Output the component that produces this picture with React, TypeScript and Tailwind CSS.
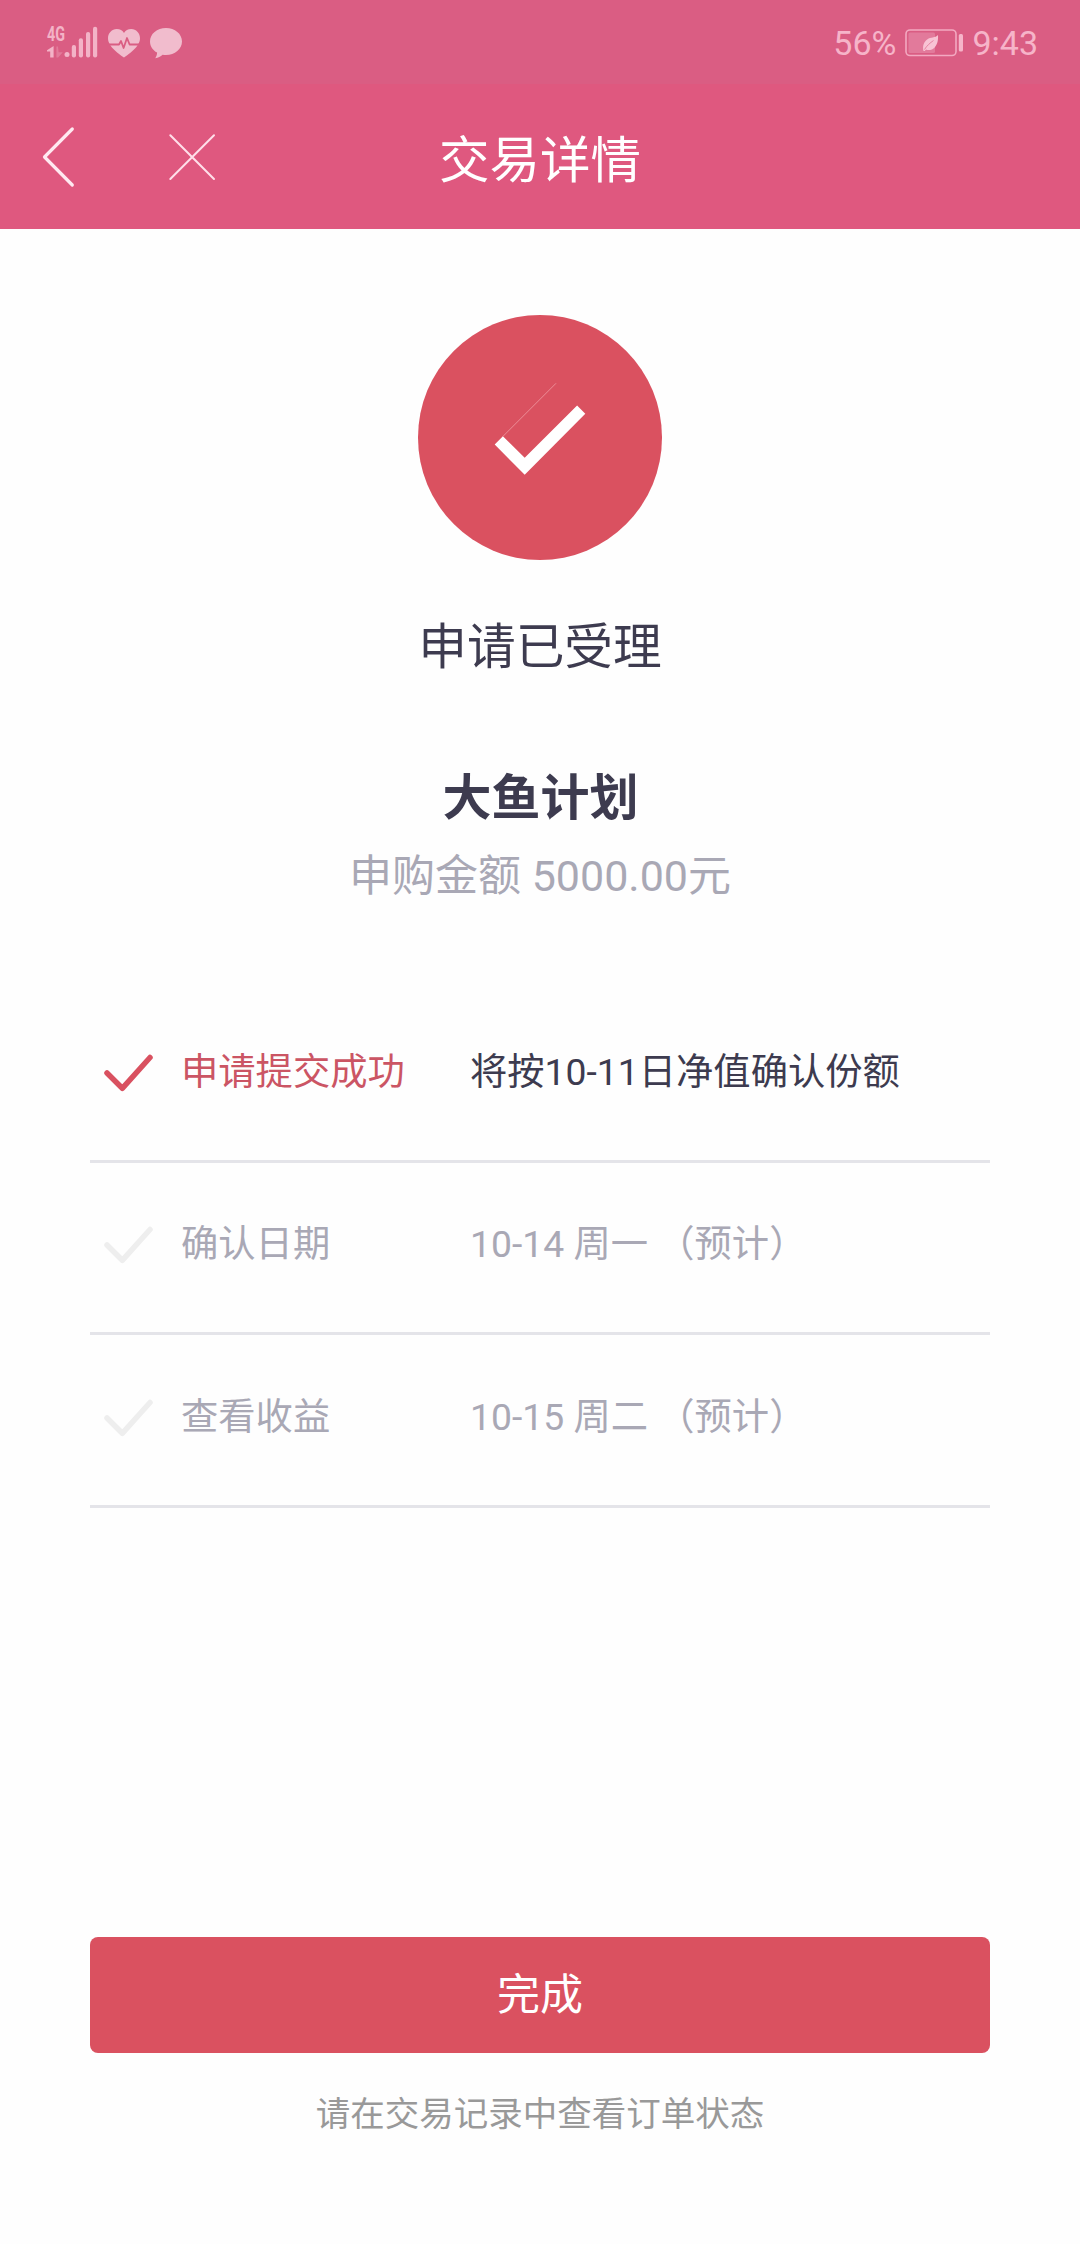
type Step = {
  label: string
  value: string
  done: boolean
}

const steps: Step[] = [
  { label: '申请提交成功', value: '将按10-11日净值确认份额', done: true },
  { label: '确认日期', value: '10-14 周一 （预计）', done: false },
  { label: '查看收益', value: '10-15 周二 （预计）', done: false },
]

function SignalIcon() {
  return (
    <svg width="56" height="40" viewBox="44 19 56 40" fill="#f3b3c7">
      <text
        x="47"
        y="40.5"
        fontSize="19.5"
        fontWeight="700"
        textLength="18"
        lengthAdjust="spacingAndGlyphs"
        className="font-['Roboto',sans-serif]"
      >
        4G
      </text>
      <path d="M53.6 46v11.5h-3.4v-6h-3.2v-1.2z" />
      <path d="M56.4 46.5v11h1.8l4.6-5.3h-4.2l-.6-5.7z" opacity="0.35" />
      <circle cx="67" cy="54.6" r="2.5" />
      <rect x="71.8" y="45" width="4.2" height="12.5" rx="2" />
      <rect x="78.8" y="38.3" width="4.2" height="19.2" rx="2" />
      <rect x="86" y="32" width="4.2" height="25.5" rx="2" />
      <rect x="93" y="26.7" width="4.2" height="30.8" rx="2" />
    </svg>
  )
}

function HeartIcon() {
  return (
    <svg width="32" height="29" viewBox="0 0 32 29" fill="none">
      <path
        d="M16 28.5C12 25.500 0 18 0 9.200 0 4 4 0 8.700 0 12 0 14.600 1.500 16 4 17.400 1.500 20 0 23.300 0 28 0 32 4 32 9.200 32 18 20 25.500 16 28.500z"
        fill="#f1bccd"
      />
      <path
        d="M1 15.500h10l2-3.500 2.600 7 3.400-10 2.600 6.500H31"
        stroke="#da5d83"
        strokeWidth="1.800"
        strokeLinejoin="round"
      />
    </svg>
  )
}

function BubbleIcon() {
  return (
    <svg width="32" height="31" viewBox="0 0 32 31" fill="#f1bccd">
      <path d="M16 0c8.900 0 16 5.900 16 13.400S24.900 27 16 27c-1.200 0-2.300-.1-3.400-.3-2 1.900-4.400 3.200-7.300 3.500 1.100-1.600 1.800-3.400 1.800-5.600C2.800 22.200 0 18.100 0 13.400 0 5.900 7.100 0 16 0z" />
    </svg>
  )
}

function BatteryIcon() {
  return (
    <svg width="58" height="28" viewBox="0 0 58 28" fill="none">
      <rect x="1" y="1" width="50" height="25.500" rx="4" stroke="#f3a9c1" strokeWidth="1.600" />
      <rect x="3.500" y="3.500" width="26.500" height="20.500" rx="1.500" fill="#e27a9b" />
      <path
        d="M18.500 22c-1.200-5 .3-9.300 4-11.800 3-2 7.700-1.200 10.500-4.200.4 6-1 10.800-4.500 13.500-2.300 1.800-5.300 2-7.500 1l-1.200 1.500z"
        fill="#f8c3d4"
      />
      <path d="M19.500 20.500c2.500-4 5.500-6.500 9-9" stroke="#e27a9b" strokeWidth="0.900" />
      <rect x="53.800" y="5" width="4.200" height="17.500" rx="1.500" fill="#f6b4c9" />
    </svg>
  )
}

function StatusBar() {
  return (
    <div className="flex h-[84px] items-start justify-between bg-[#da5d83] pl-[44px] pr-[42px] text-[34px] leading-[40px] text-[#f6b4c9]">
      <div className="flex pt-[19px]">
        <SignalIcon />
        <div className="ml-2 pt-2.5">
          <HeartIcon />
        </div>
        <div className="ml-2.5 pt-[9px]">
          <BubbleIcon />
        </div>
      </div>
      <div className="flex items-center pt-[23px]">
        <span>56%</span>
        <div className="ml-[9px] mr-[9px]">
          <BatteryIcon />
        </div>
        <span>9:43</span>
      </div>
    </div>
  )
}

function NavBar() {
  return (
    <header className="grid h-[145px] grid-cols-[1fr_auto_1fr] items-center bg-[#df587f] text-white">
      <div className="flex items-center pl-[42px]">
        <svg width="34" height="62" viewBox="0 0 34 62" fill="none">
          <path
            d="M30.300 3L2.500 31l27.800 28"
            stroke="#ffe9f1"
            strokeWidth="3.200"
            strokeLinecap="round"
            strokeLinejoin="round"
          />
        </svg>
        <svg className="ml-[92px]" width="48" height="48" viewBox="0 0 48 48" fill="none">
          <path d="M2.300 2.300l43.700 43.700M46 2.300L2.300 46" stroke="#ffdfea" strokeWidth="2" strokeLinecap="round" />
        </svg>
      </div>
      <h1 className="pt-[9px] text-[50.5px] leading-[60px]">交易详情</h1>
      <div />
    </header>
  )
}

function StepCheck({ done }: { done: boolean }) {
  return (
    <svg width="49" height="38" viewBox="0 0 49 38" fill="none">
      <path
        d="M3 19l15.300 15.300L46 3.500"
        className={done ? 'stroke-[#d95160]' : 'stroke-[#eeeeee]'}
        strokeWidth="5.500"
        strokeLinecap="round"
        strokeLinejoin="round"
      />
    </svg>
  )
}

export default function App() {
  return (
    <div className="flex min-h-[2244px] w-[1080px] flex-col bg-[#fefefe] font-['Roboto','Noto_Sans_CJK_SC',sans-serif]">
      <StatusBar />
      <NavBar />

      <main className="flex flex-1 flex-col px-[90px] pt-[86px]">
        <section className="flex flex-col items-center">
          <svg width="244" height="245" viewBox="0 0 244 245">
            <ellipse cx="122" cy="122.500" rx="122" ry="122.500" fill="#da5160" />
            <path d="M85 121.300l53-53" stroke="#eb8d98" strokeWidth="1" />
            <path d="M76.700 129.500l8.200-8.200 21.800 21.500 52.400-52.200 8.200 8.200-60.600 60.900z" fill="#fff" />
          </svg>
          <p className="mt-[58px] text-[48.7px] leading-[60px] text-[#3d3b4f]">申请已受理</p>
          <h2 className="mt-[91px] pl-px text-[49px] font-bold leading-[60px] text-[#3d3b4f]">大鱼计划</h2>
          <p className="mt-[21px] text-[43px] leading-[52px] text-[#a9a8b5]">申购金额 5000.00元</p>
        </section>

        <ul className="mt-[89px]">
          {steps.map((step) => (
            <li
              key={step.label}
              className="flex h-[172px] items-center border-b-[3px] border-[#e4e4e9] pb-[5px] pl-3.5 text-[37.3px] leading-[46px] last:h-[173px]"
            >
              <StepCheck done={step.done} />
              <span className={`ml-7 w-[289px] pb-0.5 ${step.done ? 'text-[#cb5564]' : 'text-[#a9a8b5]'}`}>
                {step.label}
              </span>
              <span className={`whitespace-pre pb-0.5 ${step.done ? 'text-[#3d3b4f]' : 'text-[#a9a8b5]'}`}>
                {step.value}
              </span>
            </li>
          ))}
        </ul>

        <button className="mt-[429px] h-[116px] rounded-lg bg-[#da5160] text-[43px] leading-[52px] text-white">
          完成
        </button>
        <p className="mt-[39px] text-center text-[34.5px] leading-[44px] text-[#999999]">
          请在交易记录中查看订单状态
        </p>
      </main>
    </div>
  )
}
